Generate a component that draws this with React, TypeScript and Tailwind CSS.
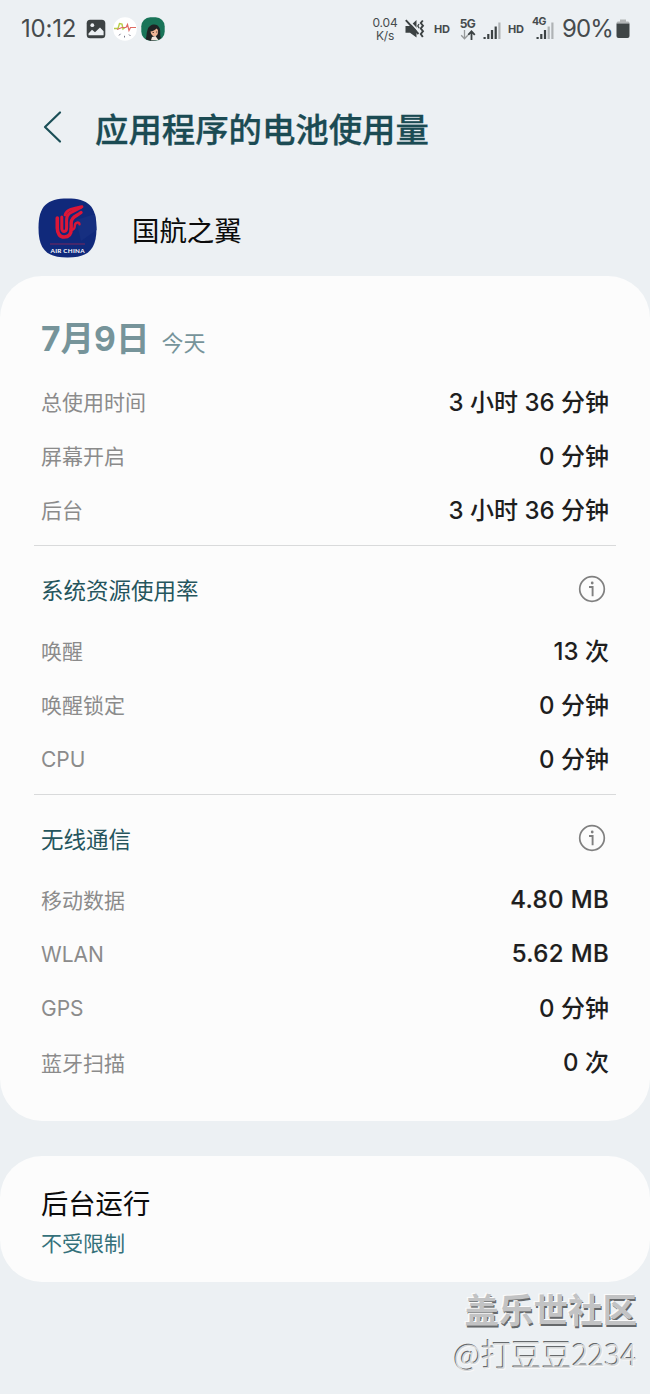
import { ReactNode } from "react";

type Row = { label: string; value: string };

const timeRows: Row[] = [
  { label: "总使用时间", value: "3 小时 36 分钟" },
  { label: "屏幕开启", value: "0 分钟" },
  { label: "后台", value: "3 小时 36 分钟" },
];

const systemRows: Row[] = [
  { label: "唤醒", value: "13 次" },
  { label: "唤醒锁定", value: "0 分钟" },
  { label: "CPU", value: "0 分钟" },
];

const wirelessRows: Row[] = [
  { label: "移动数据", value: "4.80 MB" },
  { label: "WLAN", value: "5.62 MB" },
  { label: "GPS", value: "0 分钟" },
  { label: "蓝牙扫描", value: "0 次" },
];

export default function App() {
  return (
    <div className="relative h-[1394px] w-[650px] overflow-hidden bg-[#ecf0f3] font-['Inter','Noto_Sans_CJK_SC',sans-serif]">
      <StatusBar />

      {/* Title */}
      <header className="flex h-[138px] items-center pt-[6px] pl-[42px]">
        <svg width="22" height="34" viewBox="0 0 22 34" fill="none" className="-mt-[7px]">
          <path
            d="M18 2.5L3 17L18 31.5"
            stroke="#1b4f57"
            strokeWidth="2.2"
            strokeLinecap="round"
            strokeLinejoin="round"
          />
        </svg>
        <h1 className="ml-[31px] text-[33.4px] leading-[48px] font-medium text-[#1b4b53] [-webkit-text-stroke:0.3px_#1b4b53]">
          应用程序的电池使用量
        </h1>
      </header>

      {/* App */}
      <div className="flex h-[80px] items-start pl-[38px]">
        <AppIcon />
        <span className="mt-[15px] ml-[35px] text-[27.4px] leading-[40px] text-[#0b0b0b]">国航之翼</span>
      </div>

      {/* Usage card */}
      <main className="h-[845px] rounded-[42px] bg-[#fcfcfc]">
        <div className="flex h-[99px] items-baseline pt-[39px] pl-[41px] text-[#76949a]">
          <span className="text-[33.6px] leading-[48px] font-bold">7月9日</span>
          <span className="ml-[12px] text-[22px]">今天</span>
        </div>
        <Rows rows={timeRows} />
        <Divider />
        <SectionTitle>系统资源使用率</SectionTitle>
        <Rows rows={systemRows} />
        <Divider />
        <SectionTitle>无线通信</SectionTitle>
        <Rows rows={wirelessRows} />
      </main>

      {/* Background limits */}
      <section className="mt-[35px] flex h-[126px] flex-col rounded-[42px] bg-[#fcfcfc] pt-[29px] pl-[41px]">
        <span className="text-[27.3px] leading-[40px] text-[#0b0b0b]">后台运行</span>
        <span className="mt-[3px] text-[21px] leading-[32px] text-[#35717b]">不受限制</span>
      </section>

      <div className="absolute right-[13px] bottom-[18px] flex flex-col items-end font-['Noto_Sans_CJK_SC',sans-serif] whitespace-nowrap">
        <span className="text-[34.5px] leading-[46px] font-bold text-[#c2c3c4] [text-shadow:-1.5px_-1.5px_0_#fafafa,1px_1.5px_0_#66696b]">
          盖乐世社区
        </span>
        <span className="text-[30.3px] leading-[45px] font-light text-[#d6d8d9] [text-shadow:1px_1px_0_#f8f8f8,-1px_-1px_0_#66696b]">
          @打豆豆2234
        </span>
      </div>
    </div>
  );
}

function Rows({ rows }: { rows: Row[] }) {
  return (
    <dl>
      {rows.map((row) => (
        <div key={row.label} className="flex h-[54.1px] items-center justify-between pt-[2px] pr-[41px] pl-[41px]">
          <dt className="text-[21px] text-[#8b8b8b]">{row.label}</dt>
          <dd
            className={`text-[24px] font-medium text-[#1e1e1e] ${
              row.value.endsWith("MB") ? "-mt-[2px] tracking-[0.35px] [-webkit-text-stroke:0.2px_#1e1e1e]" : ""
            }`}
          >
            {row.value}
          </dd>
        </div>
      ))}
    </dl>
  );
}

function Divider() {
  return <div className="mx-[34px] mt-[7.7px] h-px bg-[#d9dadb]" />;
}

function SectionTitle({ children }: { children: ReactNode }) {
  return (
    <div className="flex h-[78px] items-center justify-between pt-[11px] pr-[44px] pl-[41px]">
      <h2 className="text-[22.5px] text-[#25555d]">{children}</h2>
      <svg width="28" height="28" viewBox="0 0 28 28" fill="none" className="-mt-[3px]">
        <circle cx="14" cy="14" r="12.3" stroke="#808080" strokeWidth="1.7" />
        <path d="M11 12H14.6V21.2" stroke="#808080" strokeWidth="1.9" />
        <circle cx="14.2" cy="8" r="1.4" fill="#808080" />
      </svg>
    </div>
  );
}

function StatusBar() {
  return (
    <div className="flex h-[58px] items-center pl-[21px] text-[#464b4d]">
      <span className="w-[65px] text-[24px] tracking-[-0.2px]">10:12</span>

      {/* Gallery */}
      <svg width="20" height="20" viewBox="0 0 20 20">
        <rect x="0.7" y="0.7" width="18.6" height="18.6" rx="3.5" fill="#3c4243" />
        <circle cx="6.3" cy="6.2" r="1.9" fill="#ecf0f3" />
        <path d="M2.5 14.5L6 10.8L9 13.2L14 8.5L17.6 12.2V16.2H2.5Z" fill="#ecf0f3" />
      </svg>

      {/* Health */}
      <svg width="24" height="24" viewBox="0 0 24 24" fill="none" className="ml-[7px]">
        <circle cx="12" cy="12" r="11.8" fill="#fff" />
        <path d="M1 11.5H5L6.5 6.5L9 7L10 12L12 10.5" stroke="#b5ce48" strokeWidth="1.4" />
        <path d="M4 12.5L9 10.5H13L14.5 7.5L16 13.5L17.5 10.5H23" stroke="#df6b63" strokeWidth="1.2" />
        <path d="M6 18.5L7.5 16.8M11.5 20.5V18.8M17.5 19L16 17.5" stroke="#777788" strokeWidth="1" />
      </svg>

      {/* Avatar */}
      <svg width="24" height="24" viewBox="0 0 24 24" className="ml-[4px]">
        <rect x="0.3" y="0.3" width="23.4" height="23.4" rx="9" fill="#197458" />
        <path d="M4.5 22C6 20 5 17 6.5 13C8 7 16 5.5 18.5 11C20 14.5 18.5 18 20 21C16.5 24.5 8 24.5 4.5 22Z" fill="#202324" />
        <path d="M9.5 14.5C11.5 14.5 14.5 13 15.5 11.5C18 13 17.5 17.5 15 19C12.5 20.2 10 18 9.5 14.5Z" fill="#f0b596" />
        <path d="M11 20L14.5 19L17.5 23.2H10Z" fill="#efe3db" />
        <path d="M11.5 15.5H13M15 15H16.4" stroke="#3b2a25" strokeWidth="0.8" />
      </svg>

      {/* Network speed */}
      <div className="ml-[207px] w-[26px] text-center text-[12px] leading-[13px] tracking-[-0.2px]">
        <div>0.04</div>
        <div>K/s</div>
      </div>

      {/* Muted, vibrating */}
      <svg width="20" height="20" viewBox="0 0 20 20" fill="none" className="ml-[7px]">
        <path d="M0.5 7H5L11.5 1V18.5L5 13.8H0.5Z" fill="#3c4243" />
        <path d="M2.4 0.2L14.5 13" stroke="#ecf0f3" strokeWidth="1.8" />
        <path d="M0.8 1.2L13.5 15" stroke="#3c4243" strokeWidth="1.9" />
        <path
          d="M17.8 1.5L15.8 4L18 6.7L15.8 9.5L18 12.2L15.8 15L17.8 18"
          stroke="#3c4243"
          strokeWidth="1.9"
        />
        <path d="M14 5L12.8 7L14.2 9.2" stroke="#3c4243" strokeWidth="1.3" />
      </svg>

      <span className="ml-[9px] w-[17px] text-[11px] font-bold tracking-[-0.3px]">HD</span>
      <div className="ml-[8px] flex w-[17px] flex-col items-center">
        <span className="text-[12px] leading-[12px] font-bold tracking-[-0.5px]">5G</span>
        <svg width="16" height="10" viewBox="0 0 16 10" fill="none">
          <path d="M4.5 0V8.5M1.2 5.2L4.5 8.7L7.8 5.2" stroke="#96999a" strokeWidth="1.3" />
          <path d="M11.5 10V1.5M8.2 4.8L11.5 1.3L14.8 4.8" stroke="#3c4243" strokeWidth="1.8" />
        </svg>
      </div>
      <SignalBars className="mt-[2px] ml-[7px] h-[17px] w-[18px]" weak={1} />

      <span className="ml-[7px] w-[17px] text-[11px] font-bold tracking-[-0.3px]">HD</span>
      <div className="relative ml-[7px] h-[20px] w-[23px]">
        <span className="absolute -top-[3px] left-0 text-[10.5px] leading-[12px] font-bold tracking-[-0.6px]">4G</span>
        <SignalBars className="absolute top-[3px] left-[4px] h-[17px] w-[18px]" weak={2} />
      </div>

      <span className="ml-[7px] w-[54px] text-[24px] tracking-[-0.9px]">90%</span>
      <svg width="14" height="20" viewBox="0 0 14 20">
        <path d="M4 0.5H10V2.5H12Q13.5 2.5 13.5 4.5H0.5Q0.5 2.5 2 2.5H4Z" fill="#b2b5b6" />
        <path d="M0.5 4.5H13.5V17Q13.5 19 11.5 19H2.5Q0.5 19 0.5 17Z" fill="#3f4546" />
      </svg>
    </div>
  );
}

function SignalBars({ className, weak }: { className: string; weak: number }) {
  const heights = [2, 5, 9, 12.5, 16.5];
  return (
    <svg viewBox="0 0 18 17" className={className}>
      {heights.map((h, i) => (
        <rect
          key={h}
          x={0.5 + i * 3.7}
          y={17 - h}
          width="2.2"
          height={h}
          fill={i >= heights.length - weak ? "#afb3b5" : "#3c4243"}
        />
      ))}
    </svg>
  );
}

function AppIcon() {
  return (
    <svg width="59" height="60" viewBox="0 0 59 60" className="mt-[2px]">
      <path
        d="M29.5 0.5C50 0.5 58.5 8 58.5 30C58.5 52 50 59.5 29.5 59.5C9 59.5 0.5 52 0.5 30C0.5 8 9 0.5 29.5 0.5Z"
        fill="#10297b"
      />
      <path d="M38 22L57 16L58.5 32L43 43Z" fill="#162f80" />
      {/* Phoenix */}
      <g fill="none" stroke="#dc1637" strokeLinecap="round">
        <path d="M19.3 20V30C19.3 35.5 22 39 26 39C31 39 33.2 36 33.2 31" strokeWidth="3.6" />
        <path d="M23.8 19V30.5C23.8 34.5 28.6 34.5 28.6 30V22C28.6 15 33 14.5 43 9.5" strokeWidth="3" />
        <path d="M27 17C28.5 11.5 34 11 44 8.7" strokeWidth="2.8" />
        <path d="M33.2 31V25C33.2 19 38 18.5 43 14.5" strokeWidth="3.4" />
        <path d="M33.2 32C35.5 32 36.8 30 36.8 28C36.8 24 41.5 23.5 41.5 26.2" strokeWidth="2.4" />
      </g>
      <path d="M12 46H47" stroke="#78275c" strokeWidth="1" />
      <text
        x="29.5"
        y="54.8"
        textAnchor="middle"
        textLength="34"
        fontSize="6.3"
        fontWeight="bold"
        fill="#fff"
        className="font-['Lato',sans-serif]"
      >
        AIR CHINA
      </text>
    </svg>
  );
}
